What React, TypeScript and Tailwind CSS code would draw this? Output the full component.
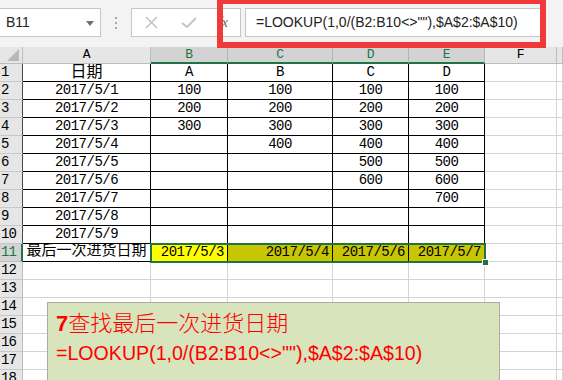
import React from "react";

const cols = ["A", "B", "C", "D", "E", "F", ""];

const rows: string[][] = [
    ["日期", "A", "B", "C", "D"],
    ["2017/5/1", "100", "100", "100", "100"],
    ["2017/5/2", "200", "200", "200", "200"],
    ["2017/5/3", "300", "300", "300", "300"],
    ["2017/5/4", "", "400", "400", "400"],
    ["2017/5/5", "", "", "500", "500"],
    ["2017/5/6", "", "", "600", "600"],
    ["2017/5/7", "", "", "", "700"],
    ["2017/5/8", "", "", "", ""],
    ["2017/5/9", "", "", "", ""],
    ["最后一次进货日期", "2017/5/3", "2017/5/4", "2017/5/6", "2017/5/7"],
];

const TOTAL_ROWS = 18;

const Toolbar = () => (
    <div className="flex items-start h-[47px] bg-[#f3f3f3] pt-[8px] font-['Liberation_Sans']">
        <div className="relative w-[101px] h-[29px] bg-white border border-[#c6c6c6] border-l-0 flex items-center pl-[6px] text-[14px] text-[#222]">
            B11
            <svg className="absolute right-[6px] top-[12px]" width="8" height="5" viewBox="0 0 8 5">
                <polygon points="0,0 8,0 4,5" fill="#707070" />
            </svg>
        </div>
        <div className="w-[30px] h-[29px] flex flex-col items-center justify-center gap-[3px]">
            <span className="w-[2px] h-[2px] bg-[#a8a8a8]" />
            <span className="w-[2px] h-[2px] bg-[#a8a8a8]" />
            <span className="w-[2px] h-[2px] bg-[#a8a8a8]" />
        </div>
        <div className="w-[110px] h-[29px] bg-white border border-[#c6c6c6] flex items-center">
            <div className="w-[38px] flex justify-center">
                <svg width="13" height="13" viewBox="0 0 13 13" stroke="#c4c4c4" strokeWidth="1.6">
                    <line x1="1" y1="1" x2="12" y2="12" />
                    <line x1="12" y1="1" x2="1" y2="12" />
                </svg>
            </div>
            <div className="w-[38px] flex justify-center">
                <svg width="16" height="13" viewBox="0 0 16 13" fill="none" stroke="#c4c4c4" strokeWidth="2">
                    <polyline points="1,7 6,11 15,2" />
                </svg>
            </div>
            <div className="w-[30px] flex justify-center text-[14px] italic text-[#666] font-['Liberation_Serif']">
                fx
            </div>
        </div>
        <div className="ml-[4px] w-[296px] h-[29px] bg-white border border-[#c6c6c6] flex items-center pl-[10px] text-[14px] text-[#222]">
            =LOOKUP(1,0/(B2:B10&lt;&gt;""),$A$2:$A$10)
        </div>
    </div>
);

const Sheet = () => (
    <div className="relative grid grid-cols-[23px_128px_77px_105px_76px_76px_72px_1fr] grid-rows-[17px_repeat(18,18px)] font-['Liberation_Mono','Noto_Sans_CJK_SC',monospace] text-[14px] text-black">
        {/* corner */}
        <div className="relative bg-[#e6e6e6] border-r border-b border-[#bcbcbc]">
            <svg className="absolute right-[3px] bottom-[2px]" width="12" height="12" viewBox="0 0 12 12">
                <polygon points="12,0 12,12 0,12" fill="#b8b8b8" />
            </svg>
        </div>
        {cols.map((c, i) => {
            const sel = i >= 1 && i <= 4;
            return (
                <div
                    key={"h" + i}
                    className={
                        sel
                            ? "flex items-center justify-center bg-[#d3d3d3] border-r border-[#b5b5b5] border-b-2 border-b-[#217346] text-[#217346] text-[13px] tracking-[-0.5px]"
                            : "flex items-center justify-center bg-[#e6e6e6] border-r border-b border-[#bcbcbc] text-[13px] tracking-[-0.5px]"
                    }
                >
                    {c}
                </div>
            );
        })}
        {Array.from({ length: TOTAL_ROWS }).map((_, r) => {
            const rowNo = r + 1;
            const data = rows[r];
            const active = rowNo === 11;
            return (
                <React.Fragment key={"r" + r}>
                    <div
                        className={
                            active
                                ? "flex items-center pl-[1px] bg-[#d3d3d3] border-b border-[#bcbcbc] border-r-2 border-r-[#217346] text-[#217346] text-[14px] tracking-[-1px]"
                                : rowNo <= 11
                                  ? "flex items-center pl-[1px] bg-[#e6e6e6] border-b border-[#c8c8c8] border-r border-r-[#4a4a4a] text-[14px] tracking-[-1px]"
                                  : "flex items-center pl-[1px] bg-[#e6e6e6] border-b border-[#c8c8c8] border-r border-r-[#bcbcbc] text-[14px] tracking-[-1px]"
                        }
                    >
                        {rowNo}
                    </div>
                    {cols.map((_, c) => {
                        const inTable = data && c <= 4;
                        const val = data && c <= 4 ? data[c] : "";
                        let cls =
                            "flex items-center whitespace-nowrap overflow-hidden border-r border-b tracking-[-0.5px] ";
                        cls += inTable ? "border-black " : "border-[#d4d4d4] ";
                        if (active && c === 1) cls += "bg-[#ffff00] ";
                        else if (active && c >= 2 && c <= 4) cls += "bg-[#c8c600] ";
                        if (active && c >= 1 && c <= 4) cls += "justify-end pr-[3px] ";
                        else cls += "justify-center ";
                        if (active && c === 0) cls += "text-[15px] tracking-[0px] ";
                        if (rowNo === 1 && c === 0) cls += "text-[16px] tracking-[0px] ";
                        return (
                            <div key={"c" + r + "-" + c} className={cls}>
                                {val}
                            </div>
                        );
                    })}
                </React.Fragment>
            );
        })}
        {/* selection B11:E11 */}
        <div className="absolute col-start-3 col-end-7 row-start-12 row-end-13 top-[-1px] left-[-1px] right-[-1px] bottom-[-1px] border-2 border-[#217346]">
            <div className="absolute right-[-5px] bottom-[-5px] w-[7px] h-[7px] bg-[#217346] border border-white" />
        </div>
    </div>
);

export default function App() {
    return (
        <div className="relative w-[563px] h-[380px] overflow-hidden bg-white">
            <Toolbar />
            <Sheet />
            {/* red annotation frame */}
            <div className="absolute left-[217px] top-[-2px] w-[329px] h-[50px] border-[6px] border-[#f03a3a]" />
            {/* text box shape */}
            <div className="absolute left-[47px] top-[302px] w-[453px] h-[100px] bg-[#d8e4bc] border border-[#a9a9a9] pl-[8px] pt-[3px] text-[#ff0000]">
                <div className="text-[22px] leading-[30px] font-['Noto_Sans_CJK_SC',sans-serif] font-light">
                    <span className="font-bold font-['Liberation_Sans']">7</span>查找最后一次进货日期
                </div>
                <div className="text-[19.6px] leading-[28px] font-['Liberation_Sans',sans-serif]">
                    =LOOKUP(1,0/(B2:B10&lt;&gt;""),$A$2:$A$10)
                </div>
            </div>
        </div>
    );
}
